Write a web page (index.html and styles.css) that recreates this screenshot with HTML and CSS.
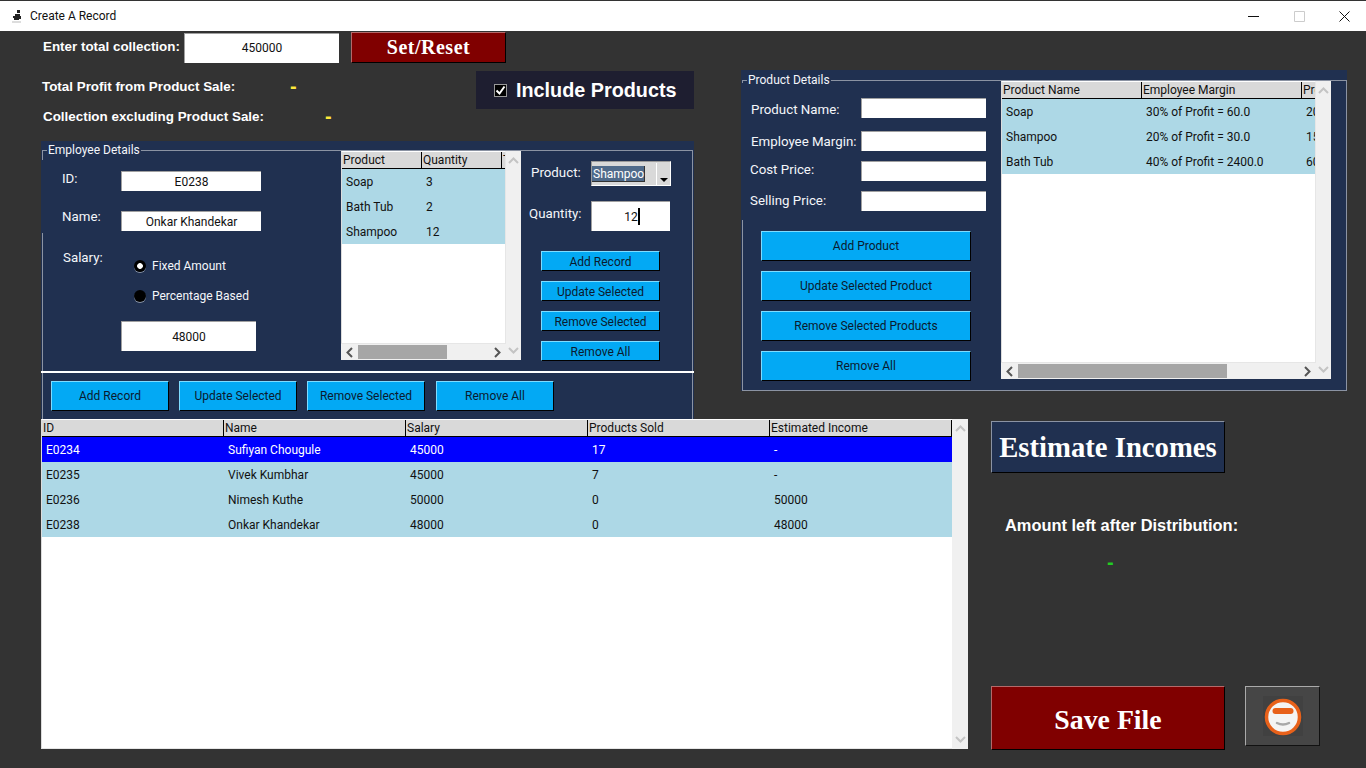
FILE: index.html
```html
<!DOCTYPE html>
<html lang="en">
<head>
  <meta charset="UTF-8">
  <title>Create A Record</title>
  <link rel="stylesheet" href="styles.css">
</head>
<body>

  <header class="titlebar">
    <svg class="app-icon" width="12" height="14" viewBox="0 0 12 14">
      <path d="M6 1h3v3H6zM4 5h5v2h1v3H8v1H3V9H2V7h2z" fill="#222"/>
      <path d="M1 13h9" stroke="#bbb"/>
    </svg>
    <span class="title-text">Create A Record</span>
    <div class="win-btns">
      <span class="win-btn"><svg width="11" height="11" viewBox="0 0 11 11"><path d="M0 5.5h11" stroke="#111"/></svg></span>
      <span class="win-btn"><svg width="11" height="11" viewBox="0 0 11 11"><path d="M.5.5h10v10H.5z" fill="none" stroke="#ccc"/></svg></span>
      <span class="win-btn win-btn-close"><svg width="11" height="11" viewBox="0 0 11 11"><path d="M.5.5l10 10M10.5.5l-10 10" stroke="#111"/></svg></span>
    </div>
  </header>

  <main class="app">
    <section class="top-row">
      <div class="left-col">
        <div class="collect-row">
          <span class="bold-label">Enter total collection:</span>
          <div class="entry entry-collect">450000</div>
          <button class="btn-red btn-set">Set/Reset</button>
        </div>

        <div class="summary-row">
          <div class="summary">
            <div class="summary-line summary-profit">
              <span class="bold-label summary-label">Total Profit from Product Sale:</span>
              <span class="dash-yellow">-</span>
            </div>
            <div class="summary-line summary-collection">
              <span class="bold-label summary-label">Collection excluding Product Sale:</span>
              <span class="dash-yellow">-</span>
            </div>
          </div>
          <div class="include-box">
            <span class="check"><svg width="11" height="11" viewBox="0 0 11 11"><path d="M1.5 5.5l3 3 5-7" fill="none" stroke="#fff" stroke-width="2"/></svg></span>
            <span>Include Products</span>
          </div>
        </div>

        <div class="panel panel-emp">
          <div class="frame frame-emp">
            <span class="legend">Employee Details</span>

            <div class="emp-form">
              <div class="emp-fields">
                <div class="field-row">
                  <span class="field-label label-id">ID:</span>
                  <div class="entry entry-emp">E0238</div>
                </div>
                <div class="field-row field-row-name">
                  <span class="field-label label-name">Name:</span>
                  <div class="entry entry-emp">Onkar Khandekar</div>
                </div>
              </div>
              <div class="salary">
                <span class="field-label label-salary">Salary:</span>
                <div class="radios">
                  <label class="radio-row"><span class="radio radio-on"></span>Fixed Amount</label>
                  <label class="radio-row"><span class="radio"></span>Percentage Based</label>
                </div>
              </div>
              <div class="entry entry-salary">48000</div>
            </div>

            <div class="tree tree-emp">
              <div class="tree-main">
                <div class="tree-row tree-head"><span>Product</span><span>Quantity</span><span>Total</span></div>
                <div class="tree-row"><span>Soap</span><span>3</span><span></span></div>
                <div class="tree-row"><span>Bath Tub</span><span>2</span><span></span></div>
                <div class="tree-row"><span>Shampoo</span><span>12</span><span></span></div>
              </div>
              <div class="vbar">
                <svg width="11" height="7" viewBox="0 0 11 7"><path d="M1 6l4.500-4.500L10 6" fill="none" stroke="#c4c4c4" stroke-width="2"/></svg>
                <svg width="11" height="7" viewBox="0 0 11 7"><path d="M1 1l4.500 4.500L10 1" fill="none" stroke="#c4c4c4" stroke-width="2"/></svg>
              </div>
              <div class="hbar">
                <span class="hbar-arrow"><svg width="7" height="11" viewBox="0 0 7 11"><path d="M6 1L1.500 5.500 6 10" fill="none" stroke="#555" stroke-width="2"/></svg></span>
                <span class="thumb thumb-emp"></span>
                <span class="hbar-arrow hbar-arrow-end"><svg width="7" height="11" viewBox="0 0 7 11"><path d="M1 1l4.500 4.500L1 10" fill="none" stroke="#555" stroke-width="2"/></svg></span>
              </div>
            </div>

            <div class="emp-controls">
              <div class="control-row">
                <span class="field-label label-product">Product:</span>
                <div class="combo">
                  <span class="combo-value">Shampoo</span>
                  <span class="combo-arrow"></span>
                </div>
              </div>
              <div class="control-row control-row-qty">
                <span class="field-label label-qty">Quantity:</span>
                <div class="entry entry-qty">12<span class="caret"></span></div>
              </div>
              <div class="small-btns">
                <button class="btn-blue">Add Record</button>
                <button class="btn-blue">Update Selected</button>
                <button class="btn-blue">Remove Selected</button>
                <button class="btn-blue">Remove All</button>
              </div>
            </div>
          </div>

          <div class="emp-sep"></div>

          <div class="emp-actions">
            <button class="btn-blue">Add Record</button>
            <button class="btn-blue">Update Selected</button>
            <button class="btn-blue">Remove Selected</button>
            <button class="btn-blue">Remove All</button>
          </div>
        </div>
      </div>

      <div class="panel panel-prod">
        <div class="frame frame-prod">
          <span class="legend">Product Details</span>

          <div class="prod-form">
            <div class="prod-fields">
              <div class="prod-row prod-row-name"><span class="field-label">Product Name:</span><div class="entry entry-prod"></div></div>
              <div class="prod-row prod-row-margin"><span class="field-label">Employee Margin:</span><div class="entry entry-prod"></div></div>
              <div class="prod-row prod-row-cost"><span class="field-label">Cost Price:</span><div class="entry entry-prod"></div></div>
              <div class="prod-row prod-row-sell"><span class="field-label">Selling Price:</span><div class="entry entry-prod"></div></div>
            </div>
            <div class="prod-btns">
              <button class="btn-blue">Add Product</button>
              <button class="btn-blue">Update Selected Product</button>
              <button class="btn-blue">Remove Selected Products</button>
              <button class="btn-blue">Remove All</button>
            </div>
          </div>

          <div class="tree tree-prod">
            <div class="tree-main">
              <div class="tree-row tree-head"><span>Product Name</span><span>Employee Margin</span><span>Profit</span></div>
              <div class="tree-row"><span>Soap</span><span>30% of Profit = 60.0</span><span>200</span></div>
              <div class="tree-row"><span>Shampoo</span><span>20% of Profit = 30.0</span><span>150</span></div>
              <div class="tree-row"><span>Bath Tub</span><span>40% of Profit = 2400.0</span><span>6000</span></div>
            </div>
            <div class="vbar">
              <svg width="11" height="7" viewBox="0 0 11 7"><path d="M1 6l4.500-4.500L10 6" fill="none" stroke="#c4c4c4" stroke-width="2"/></svg>
              <svg width="11" height="7" viewBox="0 0 11 7"><path d="M1 1l4.500 4.500L10 1" fill="none" stroke="#c4c4c4" stroke-width="2"/></svg>
            </div>
            <div class="hbar">
              <span class="hbar-arrow"><svg width="7" height="11" viewBox="0 0 7 11"><path d="M6 1L1.500 5.500 6 10" fill="none" stroke="#555" stroke-width="2"/></svg></span>
              <span class="thumb thumb-prod"></span>
              <span class="hbar-arrow hbar-arrow-end"><svg width="7" height="11" viewBox="0 0 7 11"><path d="M1 1l4.500 4.500L1 10" fill="none" stroke="#555" stroke-width="2"/></svg></span>
            </div>
          </div>
        </div>
      </div>
    </section>

    <section class="bottom-row">
      <div class="tree tree-records">
        <div class="tree-main">
          <div class="tree-row tree-head"><span>ID</span><span>Name</span><span>Salary</span><span>Products Sold</span><span>Estimated Income</span></div>
          <div class="tree-row tree-row-selected"><span>E0234</span><span>Sufiyan Chougule</span><span>45000</span><span>17</span><span>-</span></div>
          <div class="tree-row"><span>E0235</span><span>Vivek Kumbhar</span><span>45000</span><span>7</span><span>-</span></div>
          <div class="tree-row"><span>E0236</span><span>Nimesh Kuthe</span><span>50000</span><span>0</span><span>50000</span></div>
          <div class="tree-row"><span>E0238</span><span>Onkar Khandekar</span><span>48000</span><span>0</span><span>48000</span></div>
        </div>
        <div class="vbar">
          <svg width="11" height="7" viewBox="0 0 11 7"><path d="M1 6l4.500-4.500L10 6" fill="none" stroke="#c4c4c4" stroke-width="2"/></svg>
          <svg width="11" height="7" viewBox="0 0 11 7"><path d="M1 1l4.500 4.500L10 1" fill="none" stroke="#c4c4c4" stroke-width="2"/></svg>
        </div>
      </div>

      <aside class="side">
        <button class="btn-estimate">Estimate Incomes</button>
        <div class="bold-label amount-label">Amount left after Distribution:</div>
        <div class="dash-green">-</div>
        <div class="save-row">
          <button class="btn-red btn-save">Save File</button>
          <button class="btn-icon">
            <svg width="40" height="40" viewBox="0 0 40 40">
              <rect width="40" height="40" fill="#414141"/>
              <circle cx="20" cy="21" r="16.500" fill="#f4f4f4" stroke="#e8611a" stroke-width="3.500"/>
              <rect x="9.500" y="12" width="21" height="6" rx="3" fill="#e8611a"/>
              <path d="M14 27q6 3 12 0" fill="none" stroke="#a8a8a8" stroke-width="2.500" stroke-linecap="round"/>
            </svg>
          </button>
        </div>
      </aside>
    </section>
  </main>

</body>
</html>
```

FILE: styles.css
```css
* {
  box-sizing: border-box;
}

body {
  margin: 0;
  height: 768px;
  overflow: hidden;
  background: #333333;
  font-family: Roboto, "Noto Sans", sans-serif;
  font-size: 12px;
  color: #111;
}

button {
  font-family: inherit;
  padding: 0;
  cursor: pointer;
}

/* ======= title bar ======= */
.titlebar {
  display: flex;
  align-items: center;
  height: 31px;
  border-top: 1px solid #333;
  background: #fff;
}

.app-icon {
  margin-left: 11px;
}

.title-text {
  margin-left: 7px;
  font-size: 12px;
  color: #111;
}

.win-btns {
  display: flex;
  margin-left: auto;
}

.win-btn {
  display: flex;
  align-items: center;
  justify-content: center;
  width: 46px;
  height: 30px;
}

.win-btn-close {
  width: 44px;
}

/* ======= layout ======= */
.app {
  padding: 1px 0 0 41px;
}

.top-row {
  display: flex;
  height: 387px;
}

.left-col {
  width: 653px;
}

.bottom-row {
  display: flex;
}

/* ======= shared widgets ======= */
.bold-label {
  font-family: "Liberation Sans", Arial, sans-serif;
  font-weight: 700;
  font-size: 13.400px;
  color: #fff;
  white-space: nowrap;
}

.entry {
  display: flex;
  align-items: center;
  justify-content: center;
  background: #fff;
  border-top: 1px solid #a0a0a0;
  border-left: 1px solid #a0a0a0;
  color: #111;
}

.field-label {
  font-size: 13.300px;
  color: #f4f6fa;
}

.btn-blue {
  display: block;
  background: #03a9f4;
  border: 1px solid;
  border-color: #7fdcff #000 #000 #7fdcff;
  color: #0b1a2e;
  font-size: 12px;
  line-height: 14px;
}

.btn-red {
  background: #800000;
  border: 1px solid;
  border-color: #b46a6a #000 #000 #b46a6a;
  color: #fff;
  font-family: "Liberation Serif", "Times New Roman", serif;
  font-weight: 700;
}

.panel {
  position: relative;
  background: #203050;
}

.frame {
  position: relative;
  border: 1px solid #8b93a3;
  border-bottom: 0;
}

.legend {
  position: absolute;
  top: -9px;
  left: 4px;
  padding: 0 1px;
  background: #203050;
  font-size: 12px;
  line-height: 17px;
  color: #f4f6fa;
}

/* ======= top left ======= */
.collect-row {
  display: flex;
  align-items: center;
  height: 31px;
}

.collect-row .bold-label {
  width: 141px;
  margin-left: 2px;
  margin-top: -2px;
}

.entry-collect {
  width: 155px;
  height: 30px;
}

.btn-set {
  width: 155px;
  height: 31px;
  margin-left: 12px;
  font-size: 20px;
  letter-spacing: 0.5px;
}

.summary-row {
  display: flex;
  justify-content: space-between;
  height: 78px;
}

.summary {
  padding: 15px 0 0 1px;
}

.summary-line {
  display: flex;
  align-items: center;
  height: 16px;
}

.summary-collection {
  margin-top: 14px;
  margin-left: 1px;
}

.summary-profit .summary-label {
  width: 248px;
}

.summary-collection .summary-label {
  width: 282px;
}

.dash-yellow {
  font-family: "Liberation Sans", Arial, sans-serif;
  font-weight: 700;
  font-size: 20px;
  line-height: 16px;
  color: #ffe93b;
}

.include-box {
  display: flex;
  align-items: center;
  width: 218px;
  height: 38px;
  margin-top: 8px;
  padding-left: 18px;
  background: #1e1e30;
  font-family: "Liberation Sans", Arial, sans-serif;
  font-weight: 700;
  font-size: 19.800px;
  color: #fff;
}

.check {
  display: flex;
  align-items: center;
  justify-content: center;
  width: 13px;
  height: 13px;
  margin-right: 9px;
  background: #000;
  border: 1px solid #999;
}

/* ======= employee panel ======= */
.panel-emp {
  height: 278px;
  padding-top: 9px;
}

.frame-emp {
  display: grid;
  grid-template-columns: 298px 180px 1fr;
  height: 221px;
  margin: 0 1px;
}

.emp-fields {
  margin: 9px 0 0 -2px;
  padding: 11px 0 2px 80px;
  background: #203050;
}

.field-row {
  position: relative;
  height: 20px;
}

.field-row-name {
  margin-top: 20px;
}

.field-label.label-id,
.field-label.label-name {
  position: absolute;
  left: -59px;
  line-height: 16px;
}

.label-id {
  top: 0;
}

.label-name {
  top: -2px;
}

.entry-emp {
  width: 140px;
  height: 20px;
}

.salary {
  display: flex;
  margin-top: 17px;
}

.label-salary {
  width: 78px;
  padding-left: 20px;
  line-height: 16px;
}

.radios {
  margin: 8px 0 0 13px;
}

.radio-row {
  display: flex;
  align-items: center;
  gap: 6px;
  height: 16px;
  margin-bottom: 14px;
  color: #f4f6fa;
}

.radio {
  width: 12px;
  height: 12px;
  border-radius: 50%;
  background: #000;
  box-shadow: 0 1px 0 #8792a5;
}

.radio-on {
  background: radial-gradient(circle, #fff 0 2.500px, #000 3.200px);
}

.entry-salary {
  width: 135px;
  height: 30px;
  margin: 3px 0 0 78px;
}

.emp-controls {
  padding-top: 10px;
}

.control-row {
  display: flex;
  align-items: center;
  height: 25px;
}

.control-row .field-label {
  width: 70px;
  padding-left: 10px;
  margin-top: -2px;
}

.control-row .label-qty {
  padding-left: 8px;
  margin-top: -6px;
}

.control-row-qty {
  height: 30px;
  margin-top: 15px;
}

.combo {
  display: flex;
  justify-content: space-between;
  align-items: stretch;
  width: 80px;
  height: 25px;
  padding: 1px 0 0 1px;
  background: #d9d9d9;
  border: 1px solid;
  border-color: #9a9a9a #fff #fff #9a9a9a;
}

.combo-value {
  align-self: center;
  width: 53px;
  height: 16px;
  margin-left: -1px;
  background: #4f6a8a;
  border: 1px solid #333;
  border-width: 0 1px 1px 0;
  color: #fff;
  line-height: 17px;
  padding-left: 1px;
  white-space: nowrap;
}

.combo-arrow {
  position: relative;
  width: 14px;
  background: #d9d9d9;
  border-left: 1px solid #fff;
}

.combo-arrow::after {
  content: "";
  position: absolute;
  left: 3px;
  bottom: 3px;
  border: 4px solid transparent;
  border-top-color: #000;
  border-bottom: 0;
}

.entry-qty {
  width: 79px;
  height: 30px;
}

.caret {
  width: 2px;
  height: 17px;
  margin-right: -2px;
  background: #000;
}

.small-btns {
  display: flex;
  flex-direction: column;
  gap: 10px;
  margin: 20px 0 0 20px;
}

.small-btns .btn-blue {
  width: 119px;
  height: 20px;
  padding-top: 1px;
}

.emp-sep {
  height: 2px;
  background: #fff;
}

.emp-actions {
  display: flex;
  gap: 10px;
  height: 46px;
  margin: 0 1px;
  padding: 8px 0 0 8px;
  border: 1px solid #8b93a3;
  border-width: 0 1px;
}

.emp-actions .btn-blue {
  width: 118px;
  height: 30px;
}

.emp-actions .btn-blue:last-child {
  margin-left: 1px;
}

/* ======= product panel ======= */
.panel-prod {
  width: 606px;
  height: 321px;
  margin: 38px 0 0 47px;
  padding-top: 10px;
}

.frame-prod {
  display: grid;
  grid-template-columns: 258px 330px;
  height: 311px;
  margin: 0 0 0 1px;
  border-bottom: 1px solid #8b93a3;
}

.prod-fields {
  margin: 2px 0 0 -2px;
  padding-top: 15px;
  height: 137px;
  background: #203050;
}

.prod-row {
  display: flex;
  align-items: center;
  height: 20px;
  padding-left: 10px;
}

.prod-row-margin {
  margin-top: 13px;
}

.prod-row-cost,
.prod-row-sell {
  margin-top: 10px;
}

.prod-row .field-label {
  width: 110px;
  white-space: nowrap;
}

.prod-row-name .field-label {
  margin-top: 2px;
}

.prod-row-cost,
.prod-row-sell {
  padding-left: 9px;
}

.prod-row-cost .field-label {
  width: 111px;
  margin-top: -4px;
}

.prod-row-sell .field-label {
  width: 111px;
  margin-top: -2px;
}

.entry-prod {
  width: 125px;
  height: 20px;
}

.prod-btns {
  display: flex;
  flex-direction: column;
  gap: 10px;
  margin: 11px 0 0 18px;
}

.prod-btns .btn-blue {
  width: 210px;
  height: 30px;
}

/* ======= treeviews ======= */
.tree {
  display: grid;
  grid-template-columns: 1fr 15px;
  grid-template-rows: 1fr 16px;
}

.tree-emp {
  height: 209px;
}

.tree-prod {
  height: 298px;
}

.tree-records {
  grid-template-rows: 1fr;
  grid-template-columns: 911px 16px;
  width: 927px;
  height: 330px;
}

.tree-main {
  background: #fff;
  border-top: 1px solid #fff;
  border-left: 1px solid #dcdcdc;
  border-right: 1px solid #e6e6e6;
  border-bottom: 1px solid #e6e6e6;
  overflow: hidden;
}

.tree-records .tree-main {
  border-right: 0;
}

.tree-row {
  display: grid;
  height: 25px;
  background: #add8e6;
  line-height: 27px;
}

.tree-row span {
  overflow: hidden;
  padding-left: 4px;
  white-space: nowrap;
}

.tree-head {
  height: 17px;
  background: #d9d9d9;
  border-bottom: 1px solid #000;
  line-height: 17px;
}

.tree-head span {
  padding-left: 1px;
  border-right: 1px solid #000;
}

.tree-head span:last-child {
  border-right: 0;
}

.tree-records .tree-head span:last-child {
  border-right: 1px solid #000;
}

.tree-row-selected {
  background: #0000ff;
  color: #fff;
}

.tree-emp .tree-row {
  grid-template-columns: 80px 80px 1fr;
}

.tree-prod .tree-row {
  grid-template-columns: 140px 160px 1fr;
}

.tree-records .tree-row {
  grid-template-columns: repeat(5, 182px);
}

.vbar {
  grid-row: 1 / 3;
  grid-column: 2;
  display: flex;
  flex-direction: column;
  align-items: center;
  justify-content: space-between;
  padding: 6px 0;
  background: #f0f0f0;
}

.hbar {
  display: flex;
  align-items: center;
  background: #f0f0f0;
}

.hbar-arrow {
  display: flex;
  justify-content: center;
  width: 17px;
}

.hbar-arrow-end {
  margin-left: auto;
}

.thumb {
  height: 14px;
  background: #a6a6a6;
}

.thumb-emp {
  width: 89px;
}

.thumb-prod {
  width: 209px;
}

/* ======= right of the records table ======= */
.side {
  display: flex;
  flex-direction: column;
  width: 329px;
  height: 331px;
  margin-left: 23px;
}

.btn-estimate {
  width: 234px;
  height: 52px;
  margin-top: 2px;
  padding-top: 1px;
  background: #203050;
  border: 1px solid;
  border-color: #8b93a3 #000 #000 #8b93a3;
  color: #fff;
  font-family: "Liberation Serif", "Times New Roman", serif;
  font-weight: 700;
  font-size: 28.700px;
}

.bold-label.amount-label {
  margin: 43px 0 0 14px;
  font-size: 16.400px;
  line-height: 19px;
}

.dash-green {
  margin: 18px 0 0 116px;
  font-family: "Liberation Sans", Arial, sans-serif;
  font-weight: 700;
  font-size: 20px;
  line-height: 19px;
  color: #22cc22;
}

.save-row {
  display: flex;
  align-items: flex-start;
  gap: 20px;
  margin-top: auto;
}

.btn-save {
  width: 234px;
  height: 64px;
  padding-top: 4px;
  font-size: 27.800px;
}

.btn-icon {
  display: flex;
  align-items: center;
  justify-content: center;
  width: 75px;
  height: 60px;
  background: #464646;
  border: 1px solid;
  border-color: #aaa #111 #111 #aaa;
}
```
